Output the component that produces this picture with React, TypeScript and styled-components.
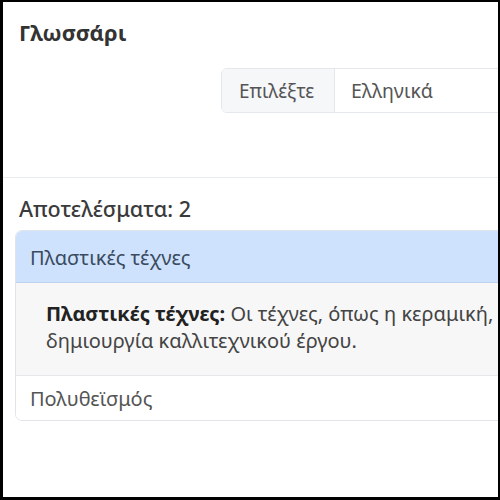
import React from 'react';
import styled, { createGlobalStyle } from 'styled-components';

const FONT = '"Noto Sans", "Open Sans", "DejaVu Sans", sans-serif';

const terms = [
  {
    title: 'Πλαστικές τέχνες',
    lines: [
      'Οι τέχνες, όπως η κεραμική, η γλυπτική και η ζωγραφική, που χρησιμοποιούν υλικά για τη',
      'δημιουργία καλλιτεχνικού έργου.',
    ],
    open: true,
  },
  { title: 'Πολυθεϊσμός', lines: [], open: false },
];

const GlobalStyle = createGlobalStyle`
  html, body {
    margin: 0;
    padding: 0;
    background: #ffffff;
  }
  body {
    font-family: ${FONT};
  }
`;

export default function App() {
  return (
    <>
      <GlobalStyle />
      <Frame>
        <Content>
          <Title>Γλωσσάρι</Title>
          <Toolbar>
            <InputGroup>
              <Addon>Επιλέξτε</Addon>
              <Select>Ελληνικά</Select>
            </InputGroup>
          </Toolbar>
          <Divider />
          <Results>
            <Count>Αποτελέσματα: 2</Count>
            <Accordion>
              {terms.map((term) => (
                <Item key={term.title}>
                  <ItemHeader $open={term.open}>{term.title}</ItemHeader>
                  {term.open && (
                    <ItemBody>
                      <Line>
                        <strong>{term.title}:</strong> {term.lines[0]}
                      </Line>
                      <Line>{term.lines[1]}</Line>
                    </ItemBody>
                  )}
                </Item>
              ))}
            </Accordion>
          </Results>
        </Content>
      </Frame>
    </>
  );
}

const Frame = styled.div`
  width: 500px;
  height: 500px;
  box-sizing: border-box;
  border-style: solid;
  border-color: #000;
  border-width: 2px 2px 3px 3px;
  overflow: hidden;
  background: #fff;
`;

const Content = styled.div`
  width: 720px;
  display: flex;
  flex-direction: column;
`;

const Title = styled.h1`
  margin: 0;
  padding: 18px 16px 0;
  font-size: 22px;
  line-height: 24px;
  font-weight: 700;
  color: #333;
`;

const Toolbar = styled.div`
  display: flex;
  justify-content: center;
  margin-top: 24px;
`;

const InputGroup = styled.div`
  display: flex;
  width: 284px;
  height: 45px;
  box-sizing: border-box;
  border: 1px solid #e4e7eb;
  border-radius: 6px;
  overflow: hidden;
`;

const Addon = styled.div`
  display: flex;
  align-items: center;
  padding: 0 17px;
  width: 113px;
  box-sizing: border-box;
  background: #f6f7f9;
  border-right: 1px solid #e4e7eb;
  font-size: 19px;
  color: #555;
`;

const Select = styled.div`
  display: flex;
  align-items: center;
  flex: 1;
  padding: 0 16px;
  font-size: 19.5px;
  color: #555;
`;

const Divider = styled.hr`
  margin: 64px 0 0;
  border: 0;
  border-top: 1px solid #e9ecef;
`;

const Results = styled.div`
  padding: 0 12px;
`;

const Count = styled.h2`
  margin: 18px 0 8px 4px;
  font-size: 21.5px;
  line-height: 26px;
  font-weight: 500;
  color: #3a3a3a;
`;

const Accordion = styled.div`
  border: 1px solid #e1e4e8;
  border-radius: 7px;
  overflow: hidden;
`;

const Item = styled.div`
  & + & {
    border-top: 1px solid #e6e8eb;
  }
`;

const ItemHeader = styled.div<{ $open: boolean }>`
  padding: 0 14px;
  height: ${(p) => (p.$open ? '52px' : '44px')};
  display: flex;
  align-items: center;
  font-size: 20px;
  color: ${(p) => (p.$open ? '#3a4b60' : '#555')};
  background: ${(p) => (p.$open ? '#cfe2fd' : '#fff')};
  box-shadow: ${(p) => (p.$open ? 'inset 0 -1px 0 #bdd3f0' : 'none')};
`;

const ItemBody = styled.div`
  padding: 17px 30px 21px;
  background: #f7f7f7;
  font-size: 20px;
  line-height: 27px;
  color: #444;

  strong {
    color: #222;
    font-weight: 700;
  }
`;

const Line = styled.div`
  white-space: nowrap;
`;
